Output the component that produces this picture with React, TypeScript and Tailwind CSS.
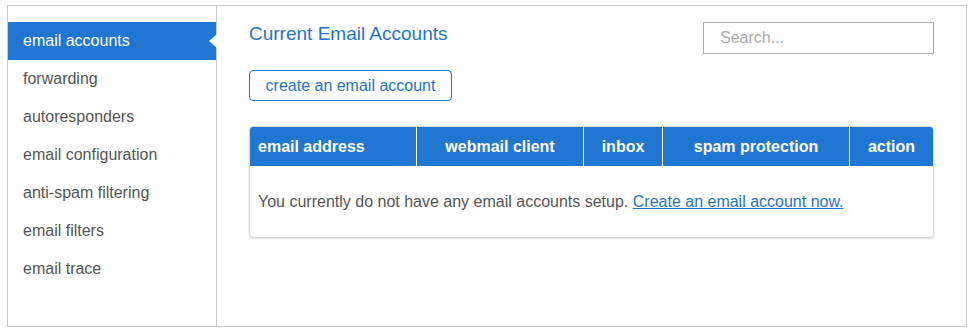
import React from "react";

const navItems = [
  "email accounts",
  "forwarding",
  "autoresponders",
  "email configuration",
  "anti-spam filtering",
  "email filters",
  "email trace",
];

const columns = [
  { label: "email address", w: "w-[167px]", align: "text-left pl-2" },
  { label: "webmail client", w: "w-[167px]", align: "text-center" },
  { label: "inbox", w: "w-[79px]", align: "text-center" },
  { label: "spam protection", w: "w-[187px]", align: "text-center" },
  { label: "action", w: "flex-1", align: "text-center" },
];

const Sidebar: React.FC = () => (
  <div className="w-[209px] shrink-0 border-r border-[#c9c9c9] pt-4">
    {navItems.map((item, i) => (
      <div
        key={item}
        className={
          i === 0
            ? "relative h-[38px] flex items-center pl-[15px] bg-[#2176d2] text-white"
            : "h-[38px] flex items-center pl-[15px] text-[#555]"
        }
      >
        {item}
        {i === 0 && (
          <span className="absolute right-[-1px] top-[12px] w-0 h-0 border-y-[7px] border-y-transparent border-r-[8px] border-r-white" />
        )}
      </div>
    ))}
  </div>
);

export default function App() {
  return (
    <div
      className="bg-white min-h-[333px] pt-[5px] pl-[7px]"
      style={{ fontFamily: '"Liberation Sans", Arial, sans-serif' }}
    >
      <div className="w-[960px] h-[322px] border border-[#c9c9c9] flex text-[16px]">
        <Sidebar />

        <div className="flex-1 pl-8 pr-8 pt-4">
          <div className="flex justify-between items-start">
            <h1 className="text-[19px] leading-[24px] text-[#2274cf]">
              Current Email Accounts
            </h1>
            <input
              placeholder="Search..."
              className="w-[231px] h-[32px] border border-[#aaa] px-4 text-[16px] placeholder:text-[#aaa] outline-none"
            />
          </div>

          <button className="mt-4 h-[31px] w-[203px] border border-[#2274cf] rounded-[4px] text-[#2274cf] text-[16px]">
            create an email account
          </button>

          <div className="mt-[25px] border border-[#d8d8d8] rounded-[4px] overflow-hidden shadow-[0_1px_2px_rgba(0,0,0,0.15)]">
            <div className="flex h-[39px] bg-[#2176d2] text-white font-semibold">
              {columns.map((c, i) => (
                <div
                  key={c.label}
                  className={`${c.w} ${c.align} flex items-center ${
                    i === 0 ? "justify-start" : "justify-center"
                  } ${i < columns.length - 1 ? "border-r border-white" : ""}`}
                >
                  {c.label}
                </div>
              ))}
            </div>
            <div className="h-[71px] flex items-center pl-2 text-[#555]">
              <span>
                You currently do not have any email accounts setup.{" "}
                <a href="#" className="text-[#2274cf] underline">
                  Create an email account now.
                </a>
              </span>
            </div>
          </div>
        </div>
      </div>
    </div>
  );
}
